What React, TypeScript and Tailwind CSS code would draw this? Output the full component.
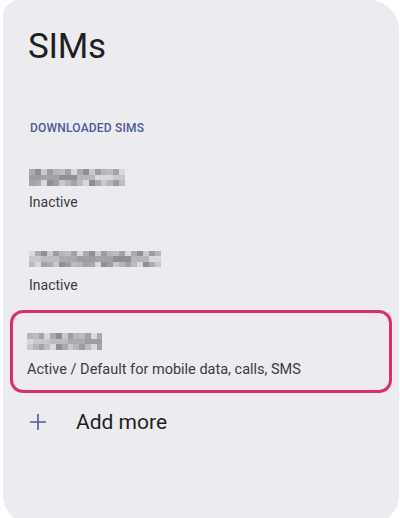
import React from "react";

const shades = [
  "bg-[#b6b6bd]",
  "bg-[#9d9da5]",
  "bg-[#c8c8ce]",
  "bg-[#8f8f98]",
  "bg-[#aaaab2]",
  "bg-[#d8d8de]",
  "bg-[#a2a2aa]",
  "bg-[#bcbcc3]",
];

function Mosaic({ cols, seed, cell }: { cols: number; seed: number; cell: string }) {
  const rows = 3;
  const items: React.ReactNode[] = [];
  for (let r = 0; r < rows; r++) {
    const row: React.ReactNode[] = [];
    for (let c = 0; c < cols; c++) {
      const idx = (c * 7 + r * 5 + seed * 3 + ((c * r + seed) % 3)) % shades.length;
      row.push(<div key={c} className={`${cell} h-[5.5px] ${shades[idx]}`} />);
    }
    items.push(
      <div key={r} className="flex">
        {row}
      </div>
    );
  }
  return <div className="flex flex-col">{items}</div>;
}

export default function App() {
  return (
    <div className="w-[400px] h-[518px] overflow-hidden bg-white" style={{ fontFamily: "Roboto, 'Noto Sans', sans-serif" }}>
      <div className="ml-[3px] w-[396px] h-[525px] bg-[#ebebf0] rounded-tl-[16px] rounded-tr-[30px] rounded-b-[30px] flex flex-col">
        <div className="pl-[25px] pt-[25px] text-[35px] leading-[44px] text-[#1f1f22] tracking-[-0.3px]">SIMs</div>
        <div className="pl-[27px] mt-[52px] text-[12px] leading-[14px] font-medium text-[#4d5b99] tracking-[0.2px]">
          DOWNLOADED SIMS
        </div>

        <div className="pl-[26px] mt-[34px] flex flex-col">
          <Mosaic cols={16} seed={1} cell="w-[6px]" />
          <div className="mt-[8px] text-[14px] leading-[16px] text-[#3c3c40]">Inactive</div>
        </div>

        <div className="pl-[26px] mt-[41px] flex flex-col">
          <Mosaic cols={22} seed={4} cell="w-[6px]" />
          <div className="mt-[10px] text-[14px] leading-[16px] text-[#3c3c40]">Inactive</div>
        </div>

        <div className="ml-[7px] mr-[7px] mt-[17px] h-[83px] border-[3px] border-[#d9306a] rounded-[13px] pl-[14px] pt-[20px] flex flex-col">
          <Mosaic cols={13} seed={2} cell="w-[5.8px]" />
          <div className="mt-[12px] text-[14.5px] leading-[16px] text-[#3c3c40]">
            Active / Default for mobile data, calls, SMS
          </div>
        </div>

        <div className="pl-[25px] mt-[16px] flex items-center h-[26px]">
          <svg width="20" height="20" viewBox="0 0 20 20" className="shrink-0">
            <path d="M10 2 V18 M2 10 H18" stroke="#4d5b99" strokeWidth="1.6" fill="none" />
          </svg>
          <span className="ml-[28px] text-[21px] leading-[26px] text-[#1f1f22]">Add more</span>
        </div>
      </div>
    </div>
  );
}
